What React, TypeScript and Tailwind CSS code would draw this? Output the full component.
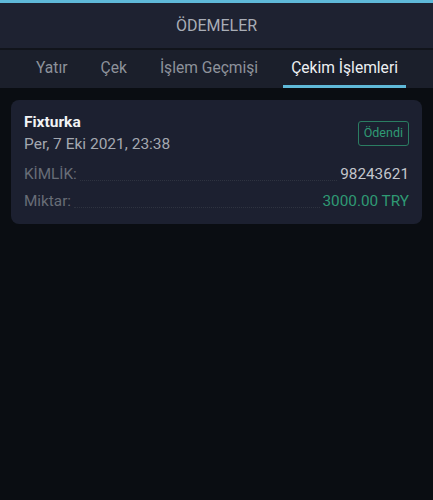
import React from "react";

export default function App() {
  const tabs = ["Yatır", "Çek", "İşlem Geçmişi", "Çekim İşlemleri"];
  return (
    <div
      className="w-[433px] h-[500px] bg-[#0a0d12] flex flex-col"
      style={{ fontFamily: "Roboto, 'Noto Sans', sans-serif" }}
    >
      <div className="h-[3px] bg-[#5fb9d9]" />
      <div className="h-[45px] bg-[#1e2231] flex items-center justify-center text-[16px] text-[#a9adb6]">
        ÖDEMELER
      </div>
      <div className="h-[2px] bg-[#11141b]" />
      <div className="h-[38px] bg-[#1b1f2b] flex items-stretch pl-[19.5px] text-[15.6px]">
        {tabs.map((t, i) => (
          <div
            key={t}
            className={
              i === 3
                ? "relative flex items-center px-[16.5px] text-[#eef0f3]"
                : "relative flex items-center px-[16.5px] text-[#8e929b]"
            }
          >
            {t}
            {i === 3 && (
              <div className="absolute left-[8.5px] right-[8px] bottom-0 h-[3px] bg-[#5fb9d9]" />
            )}
          </div>
        ))}
      </div>
      <div className="px-[11px] pt-[12px]">
        <div className="bg-[#1c2030] rounded-[8px] px-[13px] pt-[12px] pb-[9px]">
          <div className="flex items-start justify-between">
            <div className="flex flex-col">
              <span className="text-[15.5px] font-bold text-[#f1f2f4] leading-[20px]">Fixturka</span>
              <span className="text-[15.5px] text-[#a4a8b0] leading-[22px] mt-[1px]">
                Per, 7 Eki 2021, 23:38
              </span>
            </div>
            <div className="mt-[9px] border border-[#2b7d62] rounded-[3px] px-[5px] h-[25px] flex items-center text-[12.5px] text-[#2f9a74]">
              Ödendi
            </div>
          </div>
          <div className="mt-[6px] flex items-end text-[15.3px] leading-[27px]">
            <span className="text-[#686d77]">KİMLİK:</span>
            <span className="flex-1 mx-[3px] mb-[7px] border-b border-dotted border-[#2e3340]" />
            <span className="text-[#c3c6cc]">98243621</span>
          </div>
          <div className="flex items-end text-[15.3px] leading-[27px]">
            <span className="text-[#686d77]">Miktar:</span>
            <span className="flex-1 mx-[3px] mb-[7px] border-b border-dotted border-[#2e3340]" />
            <span className="text-[#2f9a74]">3000.00 TRY</span>
          </div>
        </div>
      </div>
    </div>
  );
}
